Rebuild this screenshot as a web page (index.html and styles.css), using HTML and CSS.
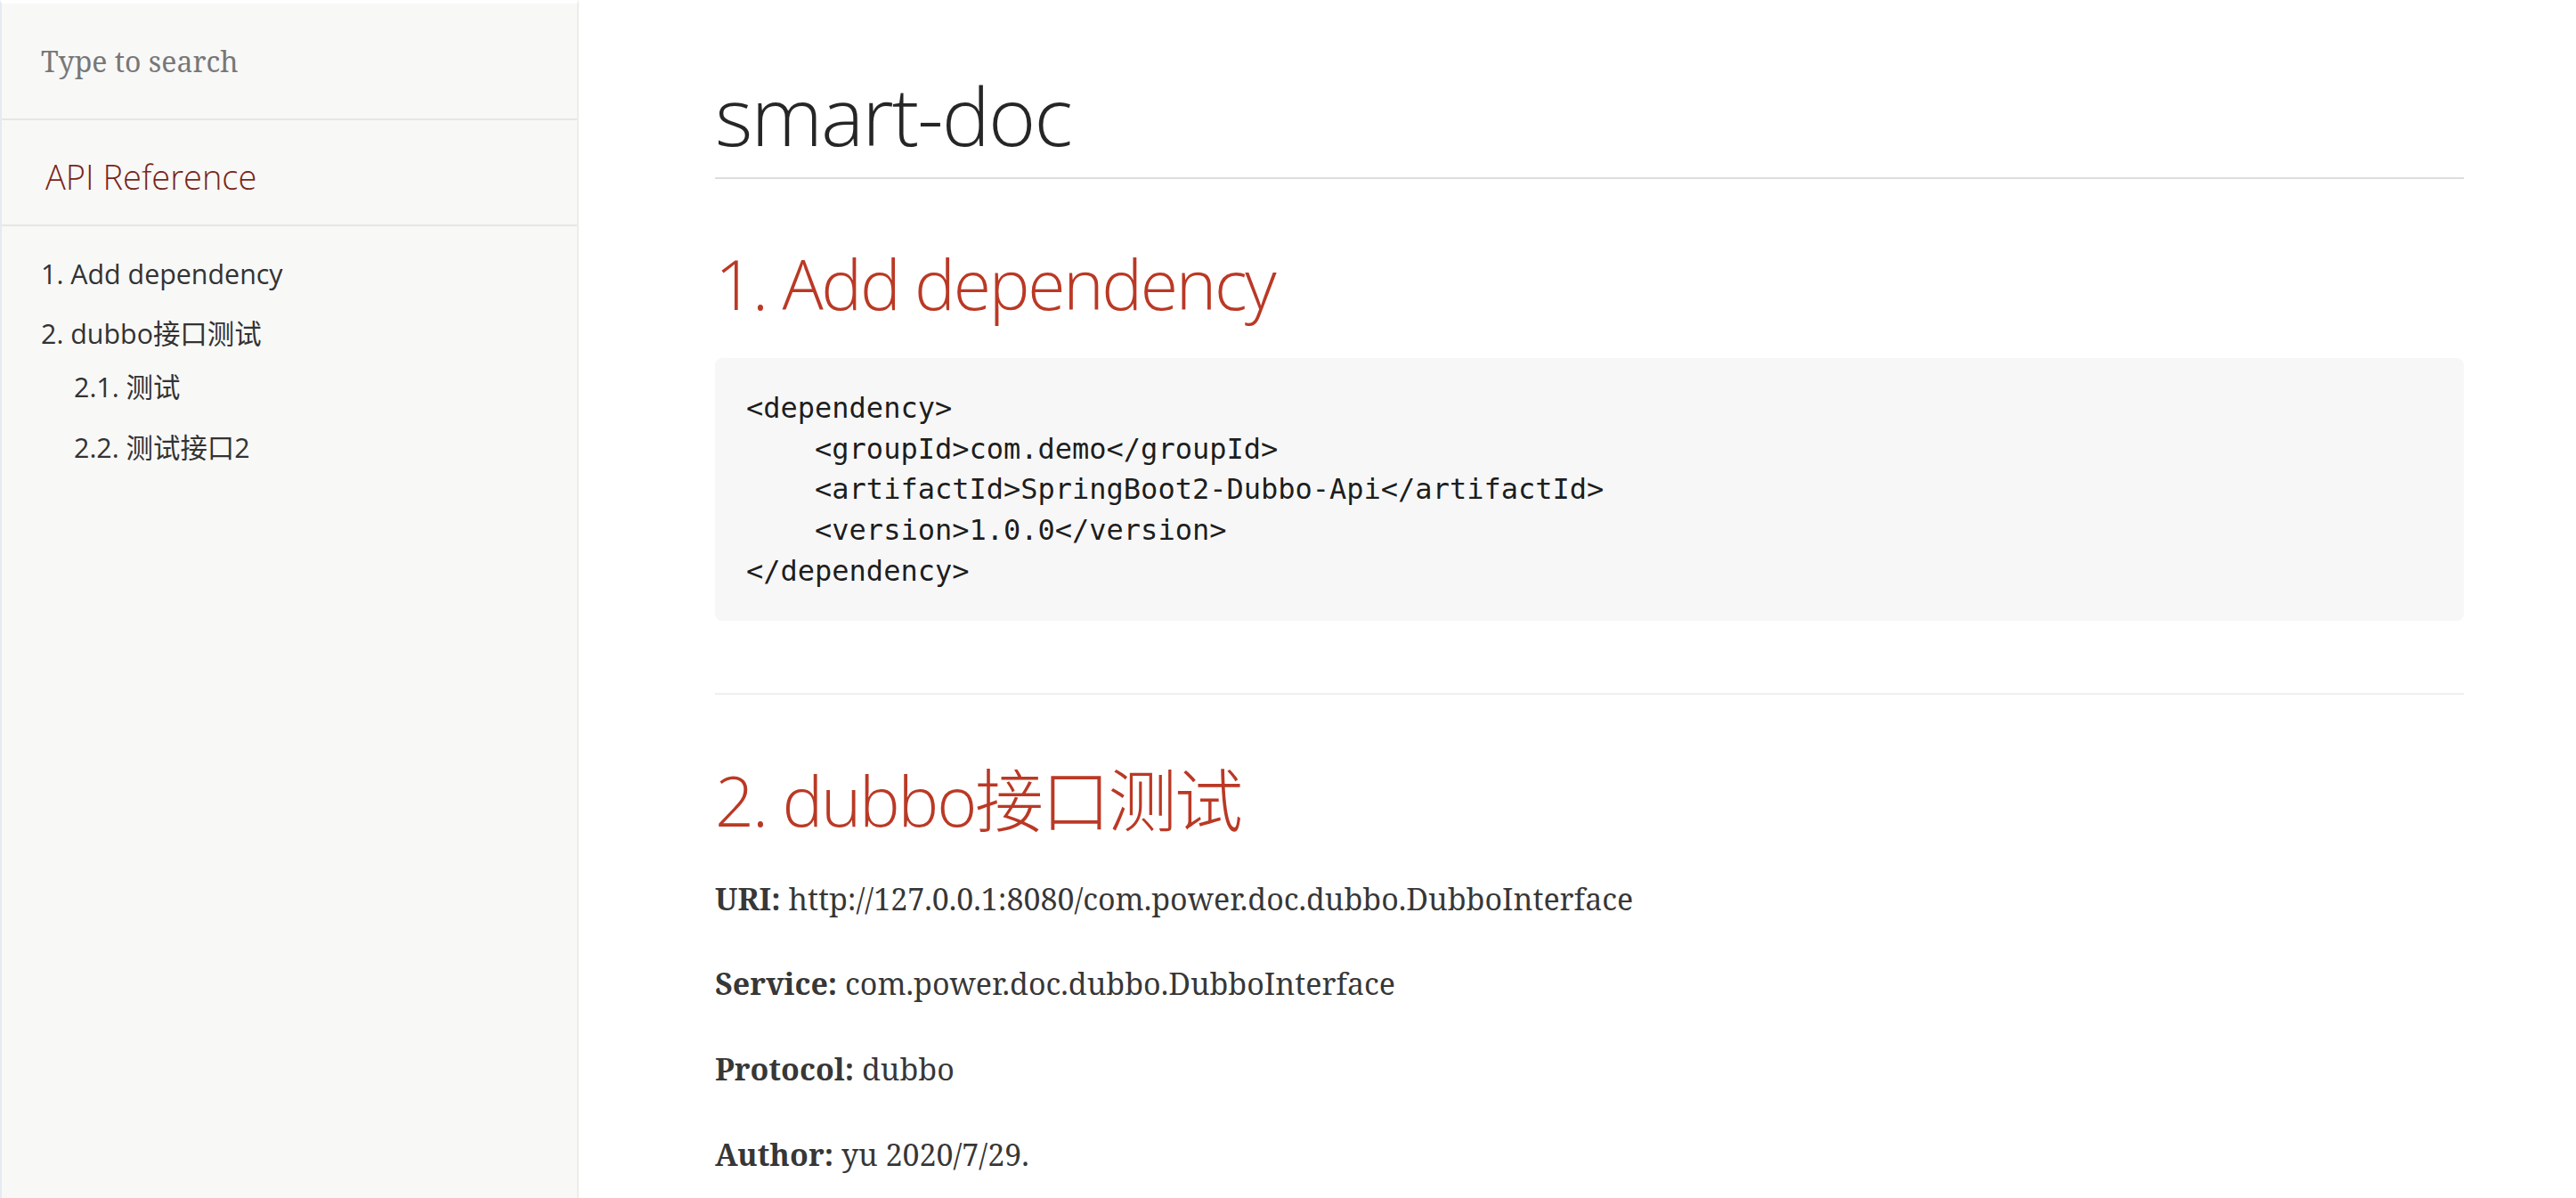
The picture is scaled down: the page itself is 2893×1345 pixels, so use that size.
FILE: index.html
```html
<!DOCTYPE html>
<html lang="en">
<head>
<meta charset="utf-8">
<title>smart-doc</title>
<link rel="stylesheet" href="styles.css">
</head>
<body>
<div class="layout">
  <aside class="toc">
    <div class="search"><input class="search-input" type="text" placeholder="Type to search"></div>
    <div class="toctitle">API Reference</div>
    <ul class="sectlevel1">
      <li><a href="#_1_add_dependency">1. Add dependency</a></li>
      <li><a href="#_2_dubbo">2. dubbo接口测试</a>
        <ul class="sectlevel2">
          <li><a href="#_2_1">2.1. 测试</a></li>
          <li><a href="#_2_2">2.2. 测试接口2</a></li>
        </ul>
      </li>
    </ul>
  </aside>
  <main class="content">
    <h1 class="doc-title">smart-doc</h1>
    <h2 class="sect-title" id="_1_add_dependency">1. Add dependency</h2>
    <pre class="listing">&lt;dependency&gt;
    &lt;groupId&gt;com.demo&lt;/groupId&gt;
    &lt;artifactId&gt;SpringBoot2-Dubbo-Api&lt;/artifactId&gt;
    &lt;version&gt;1.0.0&lt;/version&gt;
&lt;/dependency&gt;</pre>
    <hr class="divider">
    <h2 class="sect-title" id="_2_dubbo">2. dubbo接口测试</h2>
    <p class="para"><strong>URI:</strong> http://127.0.0.1:8080/com.power.doc.dubbo.DubboInterface</p>
    <p class="para"><strong>Service:</strong> com.power.doc.dubbo.DubboInterface</p>
    <p class="para"><strong>Protocol:</strong> dubbo</p>
    <p class="para"><strong>Author:</strong> yu 2020/7/29.</p>
  </main>
</div>
</body>
</html>
```

FILE: styles.css
```css
html, body {
  margin: 0;
  padding: 0;
  background: #fff;
}
body {
  font-family: "Noto Serif", "DejaVu Serif", "Noto Sans CJK SC", serif;
  color: rgba(0, 0, 0, 0.8);
  overflow: hidden;
}
.layout {
  display: flex;
  align-items: flex-start;
  height: 1345px;
}

/* ---------- sidebar ---------- */
.toc {
  box-sizing: border-box;
  width: 650px;
  flex: none;
  height: 1345px;
  background: #f8f8f7;
  border-top: 4px solid #fff;
  border-left: 2px solid #e4ebf3;
  border-right: 2px solid #ececea;
}
.search {
  box-sizing: border-box;
  height: 131px;
  display: flex;
  align-items: center;
  padding-left: 44px;
  border-bottom: 2px solid #e6e6e5;
}
.search-input {
  border: none;
  outline: none;
  background: transparent;
  padding: 0;
  margin: 0;
  width: 560px;
  height: 50px;
  font-family: "Noto Serif", "DejaVu Serif", serif;
  font-size: 32px;
  color: #333;
}
.search-input::placeholder {
  color: #777;
}
.toctitle {
  padding: 37px 0 28px 49px;
  font-family: "Open Sans", "DejaVu Sans", sans-serif;
  font-weight: 300;
  font-size: 38px;
  line-height: 52px;
  color: #7a2518;
  border-bottom: 2px solid #e6e6e5;
}
.sectlevel1, .sectlevel2 {
  list-style: none;
  margin: 0;
  padding: 0;
  font-family: "Open Sans", "DejaVu Sans", "Noto Sans CJK SC", sans-serif;
  font-size: 30.4px;
  line-height: 40.5px;
}
.sectlevel1 {
  padding: 34px 0 0 44px;
}
.sectlevel1 > li + li {
  margin-top: 26.5px;
}
.sectlevel2 {
  margin-left: 37px;
}
.sectlevel2 > li:first-child {
  margin-top: 19.5px;
}
.sectlevel2 > li + li {
  margin-top: 27.5px;
}
.toc a {
  color: #333;
  text-decoration: none;
}

/* ---------- content ---------- */
.content {
  box-sizing: content-box;
  width: 1964px;
  padding-left: 153px;
}
.doc-title {
  margin: 75px 0 0;
  padding-bottom: 15px;
  border-bottom: 2px solid #dddddd;
  font-family: "Open Sans", "DejaVu Sans", sans-serif;
  font-weight: 300;
  font-size: 91px;
  line-height: 109px;
  letter-spacing: -1.9px;
  color: rgba(0, 0, 0, 0.85);
}
.sect-title {
  margin: 72px 0 36.5px;
  font-family: "Open Sans", "DejaVu Sans", "Noto Sans CJK SC", sans-serif;
  font-weight: 300;
  font-size: 77px;
  line-height: 92.4px;
  letter-spacing: -2.3px;
  color: #ba3925;
}
.listing {
  margin: 0;
  padding: 34px 35px 32px;
  background: #f7f7f7;
  border-radius: 8px;
  font-family: "DejaVu Sans Mono", "Liberation Mono", monospace;
  font-size: 32px;
  line-height: 45.75px;
  color: rgba(0, 0, 0, 0.9);
}
.divider {
  margin: 81px 0 0;
  height: 0;
  border: none;
  border-top: 2px solid #efefef;
}
.divider + .sect-title {
  margin-top: 73px;
}
.para {
  margin: 0 0 41.7px;
  font-size: 34px;
  line-height: 54px;
  color: rgba(0, 0, 0, 0.8);
}
.para strong {
  font-weight: 700;
}
```
